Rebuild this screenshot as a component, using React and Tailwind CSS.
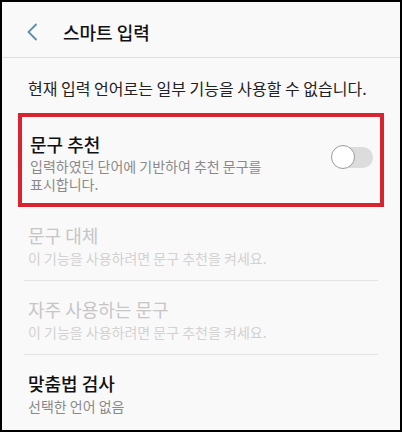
import React from 'react'

const font = { fontFamily: '"Noto Sans CJK KR", "Noto Sans", sans-serif' }

function Toggle() {
  return (
    <div className="relative w-[42px] h-[24px] shrink-0">
      <div className="absolute left-[5px] right-0 top-[2px] h-[21px] rounded-full bg-[#dcdcdc]" />
      <div className="absolute left-0 top-0 w-[24px] h-[24px] rounded-full bg-white border border-[#9a9a9a]" />
    </div>
  )
}

function Item({ title, desc, disabled }) {
  return (
    <div className="pt-[16px] pb-[13px]">
      <div className={`text-[18px] leading-[24px] ${disabled ? 'text-[#c6c6c6]' : 'text-[#111] font-medium'}`}>{title}</div>
      <div className={`text-[14px] leading-[18px] mt-[2px] ${disabled ? 'text-[#d2d2d2]' : 'text-[#8a8a8a]'}`}>{desc}</div>
    </div>
  )
}

export default function App() {
  return (
    <div className="w-[402px] h-[432px] border-2 border-black bg-[#f9f9f9] overflow-hidden" style={font}>
      <div className="h-[56px] pt-[5px] flex items-center border-b border-[#dedede]">
        <svg width="12" height="18" viewBox="0 0 12 18" className="ml-[24px]">
          <path d="M10.5 1 L2.5 9 L10.5 17" fill="none" stroke="#5b8fa6" strokeWidth="1.8" />
        </svg>
        <div className="ml-[25px] text-[18px] font-medium text-[#111]">스마트 입력</div>
      </div>
      <div className="px-[26px] pt-[19px] pb-[14px] text-[16px] leading-[22px] text-[#222]">
        현재 입력 언어로는 일부 기능을 사용할 수 없습니다.
      </div>
      <div className="mx-[16px] border-4 border-[#d9232f] pl-[8px] pr-[8px] pt-[15px] pb-[10px] flex items-center">
        <div className="flex-1">
          <div className="text-[18px] leading-[24px] font-medium text-[#111]">문구 추천</div>
          <div className="text-[14px] leading-[18px] mt-[1px] text-[#8a8a8a]">
            입력하였던 단어에 기반하여 추천 문구를<br />표시합니다.
          </div>
        </div>
        <div className="-mr-[1px] -mt-[12px]"><Toggle /></div>
      </div>
      <div className="px-[26px]">
        <div className="border-b border-[#e4e4e4] -mx-[4px] px-[4px]">
          <Item title="문구 대체" desc="이 기능을 사용하려면 문구 추천을 켜세요." disabled />
        </div>
        <div className="border-b border-[#e4e4e4] -mx-[4px] px-[4px]">
          <Item title="자주 사용하는 문구" desc="이 기능을 사용하려면 문구 추천을 켜세요." disabled />
        </div>
        <Item title="맞춤법 검사" desc="선택한 언어 없음" />
      </div>
    </div>
  )
}
